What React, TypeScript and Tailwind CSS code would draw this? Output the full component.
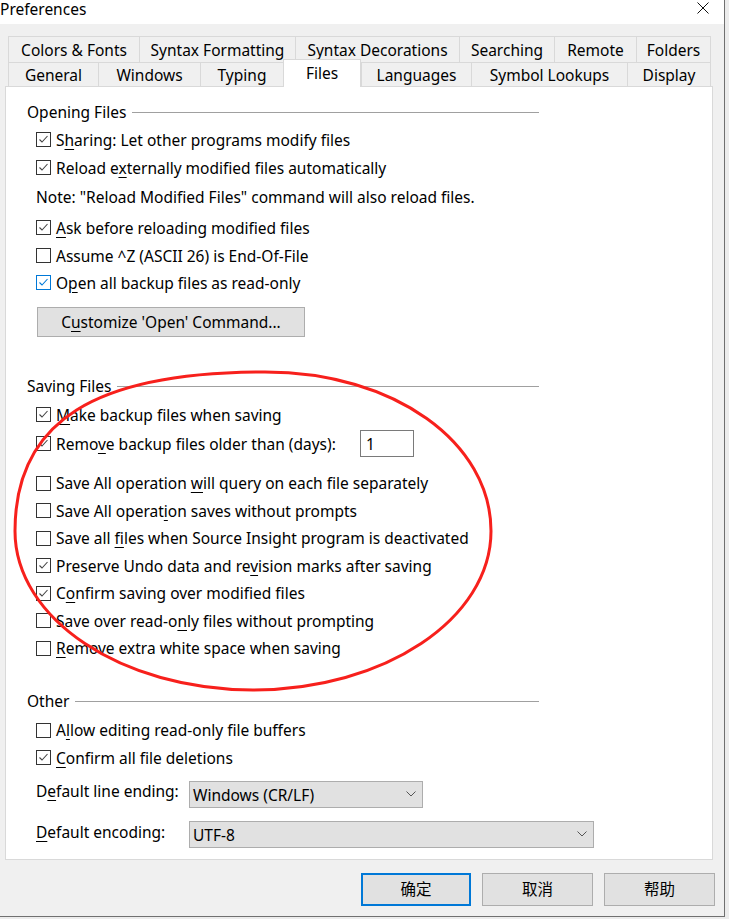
import React from 'react';

// access key marked with '&' before the letter
const Mnemonic = ({ text }: { text: string }) => {
  const i = text.indexOf('&');
  if (i < 0) return <>{text}</>;
  return (
    <>
      {text.slice(0, i)}
      <span className="underline decoration-1 underline-offset-[3px]">{text[i + 1]}</span>
      {text.slice(i + 2)}
    </>
  );
};

const Box = ({ checked, focus }: { checked: boolean; focus?: boolean }) => (
  <span
    className={`w-[15px] h-[15px] shrink-0 bg-white border flex items-center justify-center ${
      focus ? 'border-[#0078d7]' : 'border-[#333333]'
    }`}
  >
    {checked && (
      <svg width="13" height="13" viewBox="0 0 13 13">
        <polyline
          points="2.5,6.5 5,9 10.5,3"
          fill="none"
          stroke={focus ? '#0078d7' : '#444'}
          strokeWidth="1.1"
        />
      </svg>
    )}
  </span>
);

const Check = ({ label, checked, focus, className = '' }: { label: string; checked: boolean; focus?: boolean; className?: string }) => (
  <div className={`flex items-center h-[27.5px] ${className}`}>
    <Box checked={checked} focus={focus} />
    <span className="ml-[5px] pt-[2px] whitespace-nowrap">
      <Mnemonic text={label} />
    </span>
  </div>
);

const Section = ({ title, className = '' }: { title: string; className?: string }) => (
  <div className={`flex items-center h-[20px] w-[512px] ml-[21px] ${className}`}>
    <span className="whitespace-nowrap pt-[2px]">{title}</span>
    <div className="flex-1 h-px bg-[#a0a0a0] ml-[6px]" />
  </div>
);

const Chevron = () => (
  <svg width="10" height="6" viewBox="0 0 10 6">
    <polyline points="0.5,0.5 5,5 9.5,0.5" fill="none" stroke="#555" strokeWidth="1" />
  </svg>
);

const row1 = [
  { t: 'Colors & Fonts', w: 'w-[131px]' },
  { t: 'Syntax Formatting', w: 'w-[156px]' },
  { t: 'Syntax Decorations', w: 'w-[164px]' },
  { t: 'Searching', w: 'w-[95px]' },
  { t: 'Remote', w: 'w-[82px]' },
  { t: 'Folders', w: 'w-[75px]' },
];

const row2 = [
  { t: 'General', w: 'w-[90px]' },
  { t: 'Windows', w: 'w-[102px]' },
  { t: 'Typing', w: 'w-[83px]' },
  { t: 'Files', w: 'w-[78px]', active: true },
  { t: 'Languages', w: 'w-[110px]' },
  { t: 'Symbol Lookups', w: 'w-[156px]' },
  { t: 'Display', w: 'w-[84px]' },
];

export default function App() {
  return (
    <div className="relative w-[729px] h-[919px] overflow-hidden bg-[#ececec] text-[15.5px] text-black font-['Noto_Sans','Noto_Sans_CJK_SC',sans-serif]">
      <div className="w-[725px] h-[917px] bg-[#f0f0f0] border-r border-b border-[#707070] flex flex-col">
        {/* title bar */}
        <div className="h-[24px] bg-white flex justify-between items-start pr-[15px]">
          <span className="leading-[18px]">Preferences</span>
          <svg className="mt-[2px]" width="12" height="12" viewBox="0 0 12 12">
            <path d="M0.5 0.5 L11.5 11.5 M11.5 0.5 L0.5 11.5" stroke="#111" strokeWidth="1" />
          </svg>
        </div>

        {/* tabs */}
        <div className="pt-[12px] ml-[8px]">
          <div className="flex">
            {row1.map((tab, i) => (
              <div
                key={tab.t}
                className={`${tab.w} h-[26px] pt-[2px] border-t border-l border-[#d9d9d9] flex items-center justify-center whitespace-nowrap ${
                  i === row1.length - 1 ? 'border-r' : ''
                }`}
              >
                {tab.t}
              </div>
            ))}
          </div>
          <div className="flex items-end h-[24px]">
            {row2.map((tab, i) =>
              tab.active ? (
                <div
                  key={tab.t}
                  className={`${tab.w} h-[28px] -mb-px relative z-10 bg-white border-t border-l border-r border-[#d9d9d9] flex items-center justify-center`}
                >
                  {tab.t}
                </div>
              ) : (
                <div
                  key={tab.t}
                  className={`${tab.w} h-[24px] pt-[2px] border-t border-l border-[#d9d9d9] flex items-center justify-center whitespace-nowrap ${
                    i === row2.length - 1 ? 'border-r' : ''
                  }`}
                >
                  {tab.t}
                </div>
              )
            )}
          </div>
        </div>

        {/* panel */}
        <div className="ml-[5px] w-[708px] h-[774px] bg-white border border-[#d9d9d9] flex flex-col">
          <Section title="Opening Files" className="mt-[15px]" />
          <div className="pl-[30px] flex flex-col mt-[4px]">
            <Check label="S&haring: Let other programs modify files" checked />
            <Check label="Reload e&xternally modified files automatically" checked />
            <div className="h-[27.5px] mt-[2px] pt-[2px] flex items-center whitespace-nowrap">
              Note: "Reload Modified Files" command will also reload files.
            </div>
            <Check label="&Ask before reloading modified files" checked className="mt-[3.5px]" />
            <Check label="Assume ^Z (ASCII 26) is End-Of-File" checked={false} />
            <Check label="O&pen all backup files as read-only" checked focus />
            <div className="mt-[10.5px] ml-px w-[268px] h-[30px] pt-[2px] bg-[#e1e1e1] border border-[#adadad] flex items-center justify-center">
              <Mnemonic text="C&ustomize 'Open' Command..." />
            </div>
          </div>

          <Section title="Saving Files" className="mt-[39px]" />
          <div className="pl-[30px] flex flex-col mt-[5px]">
            <Check label="&Make backup files when saving" checked />
            <div className="flex items-center h-[30px]">
              <Box checked />
              <span className="ml-[5px] pt-[2px] w-[304px] whitespace-nowrap">
                <Mnemonic text="Remo&ve backup files older than (days):" />
              </span>
              <div className="w-[54px] h-[27px] border border-[#7a7a7a] flex items-center pl-[5px] pt-[2px]">1</div>
            </div>
            <Check label="Save All operation &will query on each file separately" checked={false} className="mt-[10.75px]" />
            <Check label="Save All operat&ion saves without prompts" checked={false} />
            <Check label="Save all &files when Source Insight program is deactivated" checked={false} />
            <Check label="Preserve Undo data and re&vision marks after saving" checked />
            <Check label="C&onfirm saving over modified files" checked />
            <Check label="Save over read-o&nly files without prompting" checked={false} />
            <Check label="&Remove extra white space when saving" checked={false} />
          </div>

          <Section title="Other" className="mt-[29.25px]" />
          <div className="pl-[30px] flex flex-col mt-[5.25px]">
            <Check label="A&llow editing read-only file buffers" checked={false} />
            <Check label="&Confirm all file deletions" checked />
            <div className="flex items-center mt-[9.5px] h-[27px]">
              <span className="w-[153px] mb-[5px] whitespace-nowrap">
                <Mnemonic text="D&efault line ending:" />
              </span>
              <div className="w-[234px] h-[27px] bg-[#e1e1e1] border border-[#adadad] flex items-center justify-between pl-[3px] pr-[6px]">
                <span className="pt-[2px]">Windows (CR/LF)</span>
                <Chevron />
              </div>
            </div>
            <div className="flex items-center mt-[13px] h-[27px]">
              <span className="w-[153px] mb-[3px] whitespace-nowrap">
                <Mnemonic text="&Default encoding:" />
              </span>
              <div className="w-[405px] h-[27px] bg-[#e1e1e1] border border-[#adadad] flex items-center justify-between pl-[3px] pr-[6px]">
                <span className="pt-[2px]">UTF-8</span>
                <Chevron />
              </div>
            </div>
          </div>
        </div>

        {/* dialog buttons */}
        <div className="mt-[13px] flex justify-end gap-[11px] pr-[9px]">
          <div className="w-[110px] h-[33px] bg-[#e1e1e1] border-2 border-[#0078d7] flex items-center justify-center">确定</div>
          <div className="w-[111px] h-[33px] bg-[#e1e1e1] border border-[#adadad] flex items-center justify-center">取消</div>
          <div className="w-[111px] h-[33px] bg-[#e1e1e1] border border-[#adadad] flex items-center justify-center">帮助</div>
        </div>
      </div>

      {/* hand-drawn red ellipse annotation */}
      <svg className="absolute inset-0 pointer-events-none" width="729" height="919" viewBox="0 0 729 919">
        <path
          d="M 15 531 C 15 421, 95 372, 265 372 C 395 372, 491 443, 491 531 C 491 619, 384 690, 253 690 C 122 690, 15 619, 15 531 Z"
          fill="none"
          stroke="#f7201c"
          strokeWidth="3"
        />
      </svg>
    </div>
  );
}
